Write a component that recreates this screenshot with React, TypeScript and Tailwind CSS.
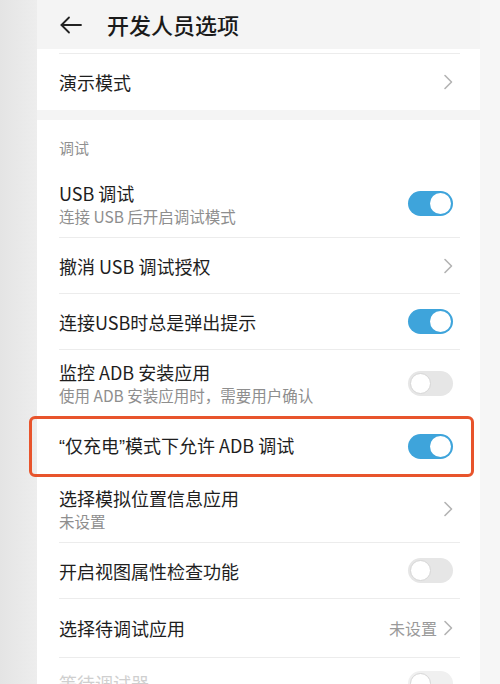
import React from "react";

type RowProps = {
  title: React.ReactNode;
  sub?: string;
  right?: "chevron" | "on" | "off";
  value?: string;
  height: string;
  disabled?: boolean;
  divider?: boolean;
  children?: React.ReactNode;
};

const Chevron = () => (
  <svg className="w-[10px] h-[16px]" viewBox="0 0 10 16" fill="none" stroke="#b3b3b3" strokeWidth="1.6" strokeLinecap="round" strokeLinejoin="round">
    <path d="M2 1.5 L8.5 8 L2 14.5" />
  </svg>
);

const Toggle = ({ on, faded }: { on: boolean; faded?: boolean }) =>
  on ? (
    <div className="w-[45px] h-[25px] rounded-full bg-[#3ea4db] flex items-center justify-end pr-[2px]">
      <div className="w-[21px] h-[21px] rounded-full bg-white" />
    </div>
  ) : (
    <div className={`w-[45px] h-[25px] rounded-full flex items-center pl-[2px] ${faded ? "bg-[#f0f0f0]" : "bg-[#e6e6e6]"}`}>
      <div className="w-[21px] h-[21px] rounded-full bg-white border border-[#d6d6d6]" />
    </div>
  );

const Row: React.FC<RowProps> = ({ title, sub, right, value, height, disabled, divider = true, children }) => (
  <div className="relative">
    <div className={`flex items-center pl-[22px] pr-[27px] ${height}`}>
      <div className="flex-1 flex flex-col">
        <span className={`text-[18px] leading-[22px] ${disabled ? "text-[#cfcfcf]" : "text-[#1e1e1e]"}`}>{title}</span>
        {sub && <span className="text-[15.5px] leading-[20px] mt-[2px] text-[#8e8e8e]">{sub}</span>}
      </div>
      {value && <span className="text-[16px] text-[#9a9a9a] mr-[6px]">{value}</span>}
      {right === "chevron" && <Chevron />}
      {right === "on" && <Toggle on />}
      {right === "off" && <Toggle on={false} faded={disabled} />}
    </div>
    {divider && <div className="ml-[22px] mr-[20px] h-px bg-[#ececec]" />}
    {children}
  </div>
);

export default function App() {
  return (
    <div
      className="w-full h-[684px] overflow-hidden flex bg-[#ececec]"
      style={{ fontFamily: '"Noto Sans CJK SC", "Noto Sans", sans-serif' }}
    >
      <div className="w-[37px] shrink-0 bg-gradient-to-r from-[#e4e4e4] to-[#ededed]" />
      <div className="w-[443px] shrink-0 bg-[#f4f4f4] flex flex-col">
        <div className="h-[49px] shrink-0 flex items-center pl-[23px]">
          <svg className="w-[22px] h-[18px]" viewBox="0 0 22 18" fill="none" stroke="#222" strokeWidth="1.8" strokeLinecap="round" strokeLinejoin="round">
            <path d="M21 9 H1.5" />
            <path d="M9 1.5 L1.5 9 L9 16.5" />
          </svg>
          <span className="ml-[25px] text-[22px] text-[#1a1a1a] font-medium">开发人员选项</span>
        </div>

        <div className="bg-white pt-[4px]">
          <div className="ml-[22px] mr-[20px] h-px bg-[#ececec]" />
          <Row title="演示模式" right="chevron" height="h-[56px]" divider={false} />
        </div>

        <div className="h-[10px] shrink-0" />

        <div className="bg-white flex-1">
          <div className="h-[56px] flex items-center pl-[22px]">
            <span className="text-[15px] text-[#909090]">调试</span>
          </div>
          <Row title="USB 调试" sub="连接 USB 后开启调试模式" right="on" height="h-[61px] pb-[6px]" />
          <Row title="撤消 USB 调试授权" right="chevron" height="h-[55px]" />
          <Row title="连接USB时总是弹出提示" right="on" height="h-[55px]" />
          <Row title="监控 ADB 安装应用" sub="使用 ADB 安装应用时，需要用户确认" right="off" height="h-[66px]" />
          <Row
            title={
              <>
                <span style={{ fontFamily: '"Liberation Sans", sans-serif' }}>“</span>仅充电
                <span style={{ fontFamily: '"Liberation Sans", sans-serif' }}>”</span>模式下允许 ADB 调试
              </>
            }
            right="on"
            height="h-[58px]"
          >
            <div className="absolute -left-[8px] right-[6px] -top-[1px] h-[61px] border-[3px] border-[#e8542c] rounded-[6px] pointer-events-none" />
          </Row>
          <Row title="选择模拟位置信息应用" sub="未设置" right="chevron" height="h-[66px]" />
          <Row title="开启视图属性检查功能" right="off" height="h-[55px]" />
          <Row title="选择待调试应用" value="未设置" right="chevron" height="h-[58px]" />
          <Row title="等待调试器" right="off" disabled height="h-[48px] pt-[2px]" divider={false} />
        </div>
      </div>
      <div className="flex-1 bg-[#f6f6f6]" />
    </div>
  );
}
